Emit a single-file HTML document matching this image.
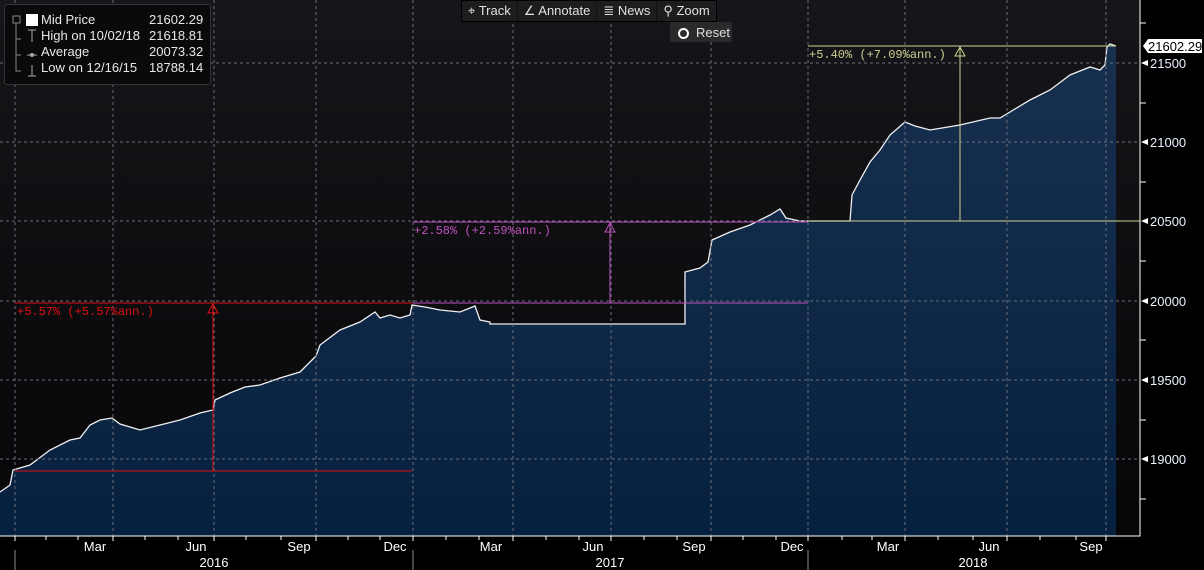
<!DOCTYPE html>
<html><head><meta charset="utf-8"><style>
body{margin:0;width:1204px;height:570px;background:#000;overflow:hidden;font-family:"Liberation Sans",sans-serif;}
svg{position:absolute;left:0;top:0}
.leg{position:absolute;left:4px;top:4px;width:205px;height:79px;background:#0a0a0c;border:1px solid #333;border-radius:3px;color:#e8e8e8;font-size:13px}
.leg div{position:absolute;left:36px}
.leg span{position:absolute;left:144px}
.tb{position:absolute;top:0;left:461px;height:20px;background:#1d1d20;border:1px solid #000;color:#e0e0e0;font-size:13px;display:flex}
.tb div{padding:2px 6px 0 6px;border-right:1px solid #111}
.rs{position:absolute;left:670px;top:22px;width:62px;height:20px;background:#2a2a2d;color:#e0e0e0;font-size:13px}
</style></head><body>
<svg width="1204" height="570">
<defs>
<linearGradient id="bg" x1="0" y1="0" x2="0" y2="1"><stop offset="0" stop-color="#16161a"/><stop offset="1" stop-color="#060608"/></linearGradient>
<linearGradient id="fl" x1="0" y1="0" x2="0" y2="1"><stop offset="0" stop-color="#17304f"/><stop offset="1" stop-color="#06203f"/></linearGradient>
</defs>
<rect x="0" y="0" width="1140" height="536" fill="url(#bg)"/>
<path d="M0,492 L10,485 L13,470 L30,465 L50,450 L70,440 L80,438 L90,425 L100,420 L112,418 L120,424 L140,430 L160,425 L180,420 L200,413 L213,410 L215,400 L230,393 L245,387 L260,385 L280,378 L300,372 L316,356 L320,345 L340,330 L360,322 L375,312 L380,318 L390,315 L400,318 L410,315 L412,305 L425,307 L440,310 L460,312 L475,306 L480,320 L490,322 L490,324 L685,324 L685,272 L700,268 L708,262 L712,240 L730,232 L750,225 L770,215 L780,209 L786,218 L800,221 L850,221 L852,195 L860,180 L870,162 L880,150 L890,135 L905,122 L915,126 L930,130 L960,125 L990,118 L1000,118 L1010,112 L1030,100 L1050,90 L1070,75 L1090,67 L1100,70 L1105,65 L1107,47 L1110,44 L1116,46 L1116,536 L0,536 Z" fill="url(#fl)" stroke="none"/>
<path d="M0,492 L10,485 L13,470 L30,465 L50,450 L70,440 L80,438 L90,425 L100,420 L112,418 L120,424 L140,430 L160,425 L180,420 L200,413 L213,410 L215,400 L230,393 L245,387 L260,385 L280,378 L300,372 L316,356 L320,345 L340,330 L360,322 L375,312 L380,318 L390,315 L400,318 L410,315 L412,305 L425,307 L440,310 L460,312 L475,306 L480,320 L490,322 L490,324 L685,324 L685,272 L700,268 L708,262 L712,240 L730,232 L750,225 L770,215 L780,209 L786,218 L800,221 L850,221 L852,195 L860,180 L870,162 L880,150 L890,135 L905,122 L915,126 L930,130 L960,125 L990,118 L1000,118 L1010,112 L1030,100 L1050,90 L1070,75 L1090,67 L1100,70 L1105,65 L1107,47 L1110,44 L1116,46" fill="none" stroke="#f0f0f0" stroke-width="1.3"/>
<g stroke="#6a6e78" stroke-width="1" stroke-dasharray="3,3">
<path d="M15,0V536M113,0V536M214,0V536M316,0V536M413,0V536M513,0V536M611,0V536M711,0V536M808,0V536M905,0V536M1007,0V536M1106,0V536"/>
<path d="M0,63H1140M0,142H1140M0,221H1140M0,301H1140M0,380H1140M0,459H1140"/>
</g>
<g stroke="#e01010" fill="none"><path d="M15,303H412M15,471H412M213,303V471"/><path d="M213,304 L208,313 L218,313Z"/></g>
<g stroke="#c050c0" fill="none"><path d="M413,222H808M413,303H808M610,222V303"/><path d="M610,223 L605,232 L615,232Z"/></g>
<g stroke="#cfcf90" fill="none"><path d="M808,46H1116M808,221H1140M960,46V221"/><path d="M960,47 L955,56 L965,56Z"/></g>
<text x="17" y="315" fill="#e01010" font-size="12" font-family="Liberation Mono,monospace">+5.57% (+5.57%ann.)</text>
<text x="414" y="234" fill="#c050c0" font-size="12" font-family="Liberation Mono,monospace">+2.58% (+2.59%ann.)</text>
<text x="809" y="58" fill="#cfcf90" font-size="12" font-family="Liberation Mono,monospace">+5.40% (+7.09%ann.)</text>
<path d="M1140,0V536H0" stroke="#fff" fill="none"/>
<g stroke="#fff"><path d="M1140,23h6M1140,103h6M1140,182h6M1140,261h6M1140,340h6M1140,420h6M1140,499h6"/>
<path d="M15,536v5M46,536v4M78,536v4M113,536v5M145,536v4M178,536v4M214,536v5M246,536v4M281,536v4M316,536v5M348,536v4M380,536v4M413,536v5M446,536v4M479,536v4M513,536v5M546,536v4M579,536v4M611,536v5M644,536v4M677,536v4M711,536v5M743,536v4M776,536v4M808,536v5M842,536v4M872,536v4M905,536v5M938,536v4M973,536v4M1007,536v5M1040,536v4M1076,536v4M1106,536v5"/></g>
<path d="M15,550V570M413,550V570M808,550V570" stroke="#888"/>
<g fill="#fff"><path d="M1141,63l7,-3v6z M1141,142l7,-3v6z M1141,221l7,-3v6z M1141,301l7,-3v6z M1141,380l7,-3v6z M1141,459l7,-3v6z"/></g>
<g fill="#e8f0ff" font-size="13"><text x="1150" y="68">21500</text><text x="1150" y="147">21000</text><text x="1150" y="226">20500</text><text x="1150" y="306">20000</text><text x="1150" y="385">19500</text><text x="1150" y="464">19000</text></g>
<path d="M1143,46 L1148,39 H1202 V53 H1148Z" fill="#fff"/>
<text x="1148" y="51" fill="#000" font-size="13">21602.29</text>
<g fill="#fff" font-size="13" text-anchor="middle"><text x="95" y="551">Mar</text><text x="196" y="551">Jun</text><text x="299" y="551">Sep</text><text x="395" y="551">Dec</text><text x="491" y="551">Mar</text><text x="593" y="551">Jun</text><text x="694" y="551">Sep</text><text x="792" y="551">Dec</text><text x="888" y="551">Mar</text><text x="989" y="551">Jun</text><text x="1091" y="551">Sep</text>
<text x="214" y="567">2016</text><text x="610" y="567">2017</text><text x="973" y="567">2018</text></g>
</svg>
<div class="leg">
<svg width="40" height="79"><rect x="8" y="11" width="7" height="7" fill="none" stroke="#888"/><path d="M11,18V66H16M11,34H16M11,50H16" stroke="#888" fill="none"/><rect x="21" y="9" width="12" height="12" fill="#fff"/><path d="M23,25h8M27,25v12M22,50h10M27,60v11M23,71h8" stroke="#aaa" fill="none"/><circle cx="27" cy="50" r="2" fill="#aaa"/></svg>
<div style="top:7px">Mid Price</div><span style="top:7px">21602.29</span>
<div style="top:23px">High on 10/02/18</div><span style="top:23px">21618.81</span>
<div style="top:39px">Average</div><span style="top:39px">20073.32</span>
<div style="top:55px">Low on 12/16/15</div><span style="top:55px">18788.14</span>
</div>
<div class="tb"><div>⌖ Track</div><div>∠ Annotate</div><div>≣ News</div><div style="border:0">⚲ Zoom</div></div>
<div class="rs"><span style="display:inline-block;width:7px;height:7px;border:2px solid #fff;border-radius:50%;margin:6px 6px 0 8px;vertical-align:top;box-sizing:content-box"></span><span style="position:absolute;top:3px;left:26px">Reset</span></div>
</body></html>
